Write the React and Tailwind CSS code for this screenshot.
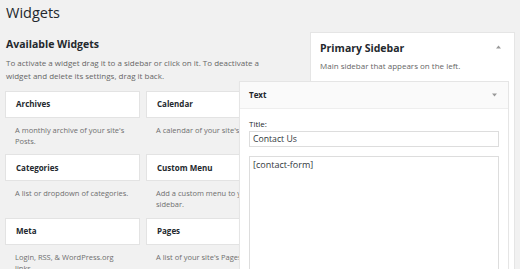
const widgets = [
  { name: 'Archives', desc: "A monthly archive of your site's Posts." },
  { name: 'Calendar', desc: "A calendar of your site's Posts." },
  { name: 'Categories', desc: 'A list or dropdown of categories.' },
  { name: 'Custom Menu', desc: 'Add a custom menu to your sidebar.' },
  { name: 'Meta', desc: 'Login, RSS, & WordPress.org links.' },
  { name: 'Pages', desc: "A list of your site's Pages." },
];

function Arrow({ up }) {
  return (
    <svg width="5" height="4" viewBox="0 0 5 4" className="block">
      {up ? <path d="M2.5 0.5 L5 3.5 L0 3.5 Z" fill="#999" /> : <path d="M0 0.5 L5 0.5 L2.5 3.5 Z" fill="#999" />}
    </svg>
  );
}

function WidgetItem({ name, desc }) {
  return (
    <div className="h-[63.5px]">
      <div className="flex h-[27px] items-center border border-[#e3e3e3] bg-white px-[10px] text-[8px] font-bold text-[#23282d]">
        {name}
      </div>
      <p className="pl-[10px] pr-[10px] pt-[7px] text-[7.5px] leading-[11px] text-[#6f6f6f]">{desc}</p>
    </div>
  );
}

export default function App() {
  return (
    <div className="h-[269px] w-[520px] overflow-hidden bg-[#f1f1f1] font-['Open_Sans',sans-serif]">
      <h1 className="h-[32px] pl-[6px] pt-[1px] text-[14.5px] font-normal leading-[24px] text-[#23282d]">Widgets</h1>

      <div className="flex">
        {/* available widgets */}
        <div className="w-[290px] shrink-0 pl-[5px]">
          <h2 className="mt-[5px] pl-[1px] text-[10.5px] font-bold leading-[14px] text-[#23282d]">Available Widgets</h2>
          <p className="mt-[5px] w-[258px] pl-[1px] text-[8px] leading-[13px] text-[#666]">
            To activate a widget drag it to a sidebar or click on it. To deactivate a widget and delete its settings, drag it back.
          </p>
          <div className="mt-[8.5px] grid grid-cols-[135px_135px] gap-x-[6px]">
            {widgets.map((w) => (
              <WidgetItem key={w.name} {...w} />
            ))}
          </div>
        </div>

        {/* sidebar */}
        <div className="relative ml-[20px] w-[205px] shrink-0">
          <div className="h-[300px] border border-[#e5e5e5] bg-white px-[9px] pt-[8px]">
            <div className="flex items-center justify-between">
              <h3 className="text-[10.5px] font-bold leading-[14px] text-[#23282d]">Primary Sidebar</h3>
              <div className="mr-[4px] mt-[-2px]">
                <Arrow up />
              </div>
            </div>
            <p className="mt-[5px] text-[8px] leading-[12px] text-[#666]">Main sidebar that appears on the left.</p>

            {/* expanded text widget */}
            <div className="ml-[-81px] mr-[-4px] mt-[9px] border border-[#e5e5e5] bg-white shadow-[0_1px_1px_rgba(0,0,0,0.04)]">
              <div className="flex h-[27px] items-center justify-between border-b border-[#eee] bg-[#fafafa] pl-[9px] pr-[11px]">
                <span className="text-[8px] font-bold text-[#23282d]">Text</span>
                <Arrow />
              </div>
              <div className="px-[9px] pt-[9px]">
                <label className="block text-[8px] leading-[11px] text-[#23282d]">Title:</label>
                <div className="mt-[2px] flex h-[16px] items-center border border-[#ddd] bg-white px-[3px] text-[8.7px] leading-[12px] text-[#32373c]">
                  Contact Us
                </div>
                <div className="mt-[9px] h-[200px] border border-[#ddd] bg-white px-[3px] pt-[1px] text-[9px] leading-[13px] text-[#32373c]">
                  [contact-form]
                </div>
              </div>
            </div>
          </div>
        </div>
      </div>
    </div>
  );
}
